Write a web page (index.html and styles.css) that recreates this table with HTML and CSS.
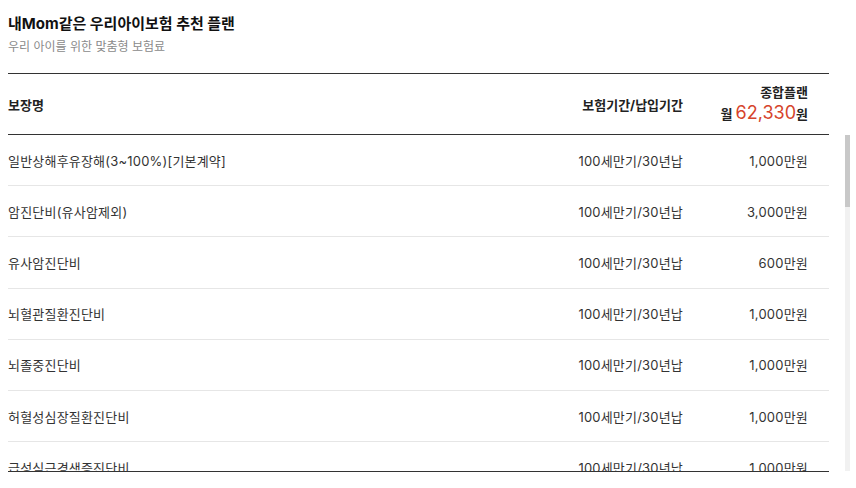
FILE: index.html
```html
<!DOCTYPE html>
<html lang="ko">
<head>
<meta charset="utf-8">
<link rel="stylesheet" href="styles.css">
</head>
<body>
<div class="page">
  <header class="head">
    <h1 class="title">내Mom같은 우리아이보험 추천 플랜</h1>
    <p class="sub">우리 아이를 위한 맞춤형 보험료</p>
  </header>
  <div class="table-wrap">
    <div class="table">
      <div class="row thead">
        <div class="c-name">보장명</div>
        <div class="c-term">보험기간/납입기간</div>
        <div class="c-amt">
          <div class="plan">종합플랜</div>
          <div class="price">월 <span class="num">62,330</span>원</div>
        </div>
      </div>
      <div class="tbody">
        <div class="row"><div class="c-name">일반상해후유장해(3~100%)[기본계약]</div><div class="c-term">100세만기/30년납</div><div class="c-amt">1,000만원</div></div>
        <div class="row"><div class="c-name">암진단비(유사암제외)</div><div class="c-term">100세만기/30년납</div><div class="c-amt">3,000만원</div></div>
        <div class="row"><div class="c-name">유사암진단비</div><div class="c-term">100세만기/30년납</div><div class="c-amt">600만원</div></div>
        <div class="row"><div class="c-name">뇌혈관질환진단비</div><div class="c-term">100세만기/30년납</div><div class="c-amt">1,000만원</div></div>
        <div class="row"><div class="c-name">뇌졸중진단비</div><div class="c-term">100세만기/30년납</div><div class="c-amt">1,000만원</div></div>
        <div class="row"><div class="c-name">허혈성심장질환진단비</div><div class="c-term">100세만기/30년납</div><div class="c-amt">1,000만원</div></div>
        <div class="row"><div class="c-name">급성심근경색증진단비</div><div class="c-term">100세만기/30년납</div><div class="c-amt">1,000만원</div></div>
        <div class="row"><div class="c-name">상해입원일당</div><div class="c-term">100세만기/30년납</div><div class="c-amt">3만원</div></div>
      </div>
    </div>
    <div class="scrollbar"><div class="thumb"></div></div>
  </div>
</div>
</body>
</html>
```
FILE: styles.css
```css
* { box-sizing: border-box; }
html, body { margin: 0; background: #fff; }
body {
  font-family: Inter, "Noto Sans CJK KR", "Noto Sans", sans-serif;
  color: #222;
  overflow: hidden;
}
.page { padding: 8px 8px 0 8px; }
.head { height: 65px; padding-top: 6px; }
.title {
  margin: 0;
  font-size: 15px;
  font-weight: 700;
  line-height: 20px;
  color: #111;
}
.sub {
  margin: 4px 0 0 0;
  font-size: 12px;
  line-height: 17px;
  color: #8a8a8a;
}
.table-wrap {
  display: flex;
  align-items: flex-end;
}
.table {
  flex: 0 0 821px;
  border-top: 1px solid #333;
  border-bottom: 1px solid #333;
}
.row {
  display: flex;
  align-items: center;
  height: 51.2px;
  border-bottom: 1px solid #e6e6e6;
  font-size: 13px;
  color: #333;
  letter-spacing: 0.2px;
}
.thead {
  height: 61px;
  border-bottom: 1px solid #333;
  font-weight: 700;
  color: #222;
  letter-spacing: 0;
}
.tbody {
  height: 336px;
  overflow: hidden;
}
.c-name { flex: 1; }
.c-term { width: 200px; text-align: right; }
.c-amt { width: 146px; text-align: right; padding-right: 21px; }
.plan { font-size: 13px; line-height: 18px; }
.price { font-size: 13px; line-height: 22px; margin-top: 1px; }
.num {
  font-size: 18px;
  color: #d6442c;
  font-weight: 400;
}
.scrollbar {
  flex: 0 0 5px;
  height: 336px;
  margin-left: 16px;
  margin-bottom: 1px;
  background: #f1f1f1;
}
.thumb {
  height: 72px;
  background: #c8c8c8;
}
```
